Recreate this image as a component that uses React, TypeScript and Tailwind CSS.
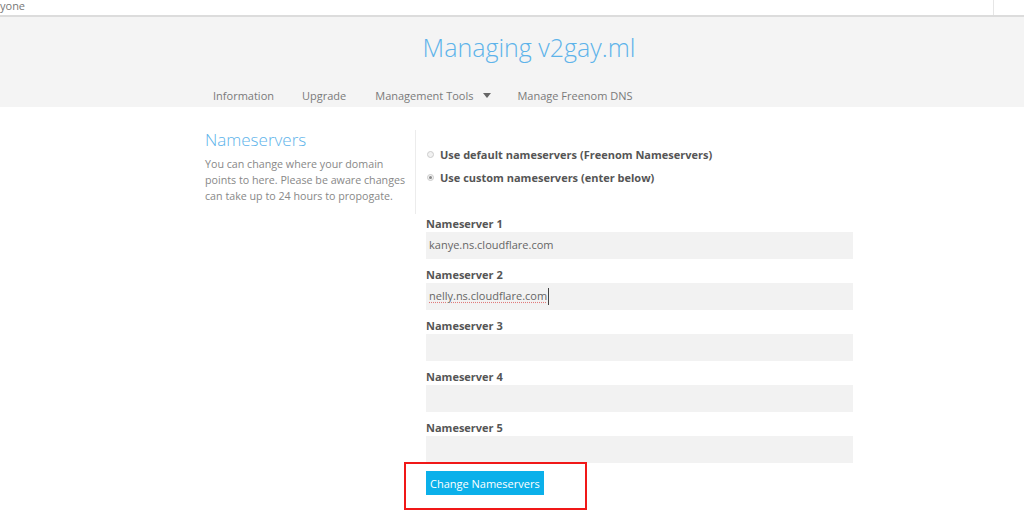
import React from 'react';

const servers = [
  { label: 'Nameserver 1', value: 'kanye.ns.cloudflare.com' },
  { label: 'Nameserver 2', value: 'nelly.ns.cloudflare.com', active: true },
  { label: 'Nameserver 3', value: '' },
  { label: 'Nameserver 4', value: '' },
  { label: 'Nameserver 5', value: '' },
];

const App = () => {
  return (
    <div className="w-[1024px] h-[516px] overflow-hidden bg-white font-['Open_Sans',sans-serif] relative">
      {/* top strip */}
      <div className="h-[17px] border-b-2 border-[#dcdcdc] bg-white flex">
        <div className="flex-1 text-[11px] text-[#777] leading-[12px]">yone</div>
        <div className="w-[31px] border-l border-[#e6e6e6]"></div>
      </div>

      {/* header */}
      <div className="bg-[#f4f4f4] h-[90px]">
        <h1 className="text-center font-light text-[25px] text-[#5db3ea] pt-[14px] pl-[34px] leading-[32px]">
          Managing v2gay.ml
        </h1>
        <nav className="flex pl-[213px] pt-[27px] text-[11px] text-[#7a7a7a] leading-none">
          <span>Information</span>
          <span className="ml-[28px]">Upgrade</span>
          <span className="ml-[29px] flex items-center">
            Management Tools
            <svg width="8" height="5" viewBox="0 0 8 5" className="ml-[10px] mb-[1px]">
              <path d="M0 0h8L4 5z" fill="#666" />
            </svg>
          </span>
          <span className="ml-[26px]">Manage Freenom DNS</span>
        </nav>
      </div>

      {/* content */}
      <div className="flex pl-[205px] pt-[23px]">
        <div className="w-[211px] border-r border-[#ececec] h-[84px]">
          <h2 className="text-[17px] font-light text-[#5db3ea] leading-[20px]">Nameservers</h2>
          <p className="mt-[6px] text-[10.7px] leading-[16px] text-[#888]">
            You can change where your domain points to here. Please be aware changes can take up to 24 hours to propogate.
          </p>
        </div>

        <div className="pl-[10px] w-[448px]">
          <div className="pt-[19px] flex flex-col gap-[12px] text-[11px] font-bold text-[#555] leading-none">
            <label className="flex items-center">
              <span className="w-[7px] h-[7px] rounded-full border border-[#ccc] bg-[#f2f2f2] mr-[6px] ml-[1px]"></span>
              Use default nameservers (Freenom Nameservers)
            </label>
            <label className="flex items-center">
              <span className="w-[7px] h-[7px] rounded-full border border-[#ccc] bg-[#f2f2f2] mr-[6px] ml-[1px] flex items-center justify-center">
                <span className="w-[3px] h-[3px] rounded-full bg-[#888]"></span>
              </span>
              Use custom nameservers (enter below)
            </label>
          </div>

          <div className="mt-[34px] flex flex-col gap-[9px]">
            {servers.map((s) => (
              <div key={s.label}>
                <div className="text-[11px] font-bold text-[#555] leading-[14px] mb-[1px]">{s.label}</div>
                <div className="h-[27px] w-[427px] bg-[#f2f2f2] flex items-center pl-[3px] text-[11px] text-[#666]">
                  {s.active ? (
                    <span className="underline decoration-dotted decoration-[#e07b7b] underline-offset-2 border-r border-[#444] pr-[1px]">
                      {s.value}
                    </span>
                  ) : (
                    s.value
                  )}
                </div>
              </div>
            ))}
          </div>

          <button className="mt-[8px] h-[24px] px-[4px] bg-[#0bb0ea] text-white text-[11px] leading-none">
            Change Nameservers
          </button>
        </div>
      </div>

      {/* annotation box */}
      <div className="absolute left-[404px] top-[462px] w-[183px] h-[48px] border-2 border-[#f01818]"></div>
    </div>
  );
};

export default App;
